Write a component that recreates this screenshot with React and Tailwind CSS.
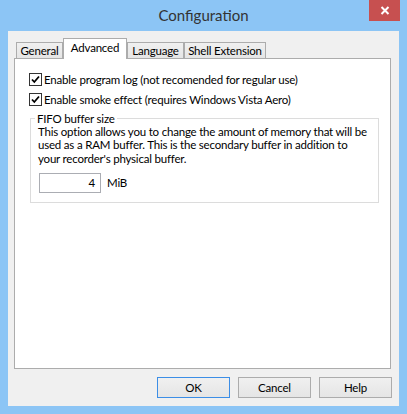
import React from "react";

function Check() {
  return (
    <div className="w-[13px] h-[13px] border border-[#333333] bg-white flex items-center justify-center shrink-0">
      <svg width="11" height="11" viewBox="0 0 11 11">
        <path d="M2 5.5 L4.3 8 L9 2.5" fill="none" stroke="#000" strokeWidth="1.8" />
      </svg>
    </div>
  );
}

function Tab({ label, w, active }) {
  if (active) {
    return (
      <div className={`relative z-10 h-[21px] -mb-px border border-b-0 border-[#acacac] bg-white flex items-start justify-center pt-[3px] ${w}`}>
        {label}
      </div>
    );
  }
  return (
    <div className={`h-[16px] border border-b-0 border-[#acacac] bg-gradient-to-b from-[#f0f0f0] to-[#e5e5e5] flex items-center justify-center pt-px ${w}`}>
      {label}
    </div>
  );
}

function Btn({ label, def }) {
  return (
    <div className={`w-[73px] h-[21px] border ${def ? "border-[#3c8ee6]" : "border-[#acacac]"} bg-gradient-to-b from-[#f0f0f0] to-[#e5e5e5] flex items-center justify-center`}>
      {label}
    </div>
  );
}

export default function App() {
  return (
    <div className="w-[407px] h-[414px] bg-[#8cc5f5] flex flex-col font-[Lato,sans-serif] text-[11.5px] tracking-[-0.2px] text-black leading-none">
      <div className="h-[31px] relative flex items-center justify-center">
        <span className="text-[15px] tracking-normal text-[#333333] -mt-[1px]">Configuration</span>
        <div className="absolute right-[7px] top-0 w-[31px] h-[21px] bg-[#c75050] flex items-center justify-center">
          <svg width="10" height="9" viewBox="0 0 10 9">
            <path d="M1.5 1 L8.5 8 M8.5 1 L1.5 8" stroke="#fff" strokeWidth="2" />
          </svg>
        </div>
      </div>
      <div className="mx-[8px] mb-[8px] flex-1 bg-[#f0f0f0] flex flex-col pl-[6px] pr-[8px] pt-[7px]">
        <div className="h-[20px] flex items-end pl-[2px]">
          <Tab label="General" w="w-[47px]" />
          <Tab label="Advanced" w="w-[64px]" active />
          <Tab label="Language" w="w-[57px]" />
          <Tab label="Shell Extension" w="w-[82px]" />
        </div>
        <div className="h-[311px] border border-[#acacac] bg-white pl-[14px] pt-[14px] pr-[11px] flex flex-col">
          <div className="h-[20px] flex items-start gap-[2px]">
            <Check />
            <span className="leading-[13px] whitespace-nowrap">Enable program log (not recomended for regular use)</span>
          </div>
          <div className="h-[20px] flex items-start gap-[2px]">
            <Check />
            <span className="leading-[13px] whitespace-nowrap">Enable smoke effect (requires Windows Vista Aero)</span>
          </div>
          <div className="relative mt-[5px] ml-[1px] h-[85px] border border-[#dcdcdc] pl-[7px] pt-[6px] flex flex-col">
            <span className="absolute -top-[7px] left-[4px] bg-white px-[2px] leading-[13px]">FIFO buffer size</span>
            <p className="leading-[13.3px] whitespace-nowrap">
              This option allows you to change the amount of memory that will be
              <br />
              used as a RAM buffer. This is the secondary buffer in addition to
              <br />
              your recorder's physical buffer.
            </p>
            <div className="mt-[8px] flex items-center gap-[6px] ml-[1px]">
              <div className="w-[62px] h-[20px] border border-[#abadb3] bg-white flex items-center justify-end pr-[5px]">4</div>
              <span>MiB</span>
            </div>
          </div>
        </div>
        <div className="mt-[8px] flex justify-end gap-[8px] -mr-px">
          <Btn label="OK" def />
          <Btn label="Cancel" />
          <Btn label="Help" />
        </div>
      </div>
    </div>
  );
}
